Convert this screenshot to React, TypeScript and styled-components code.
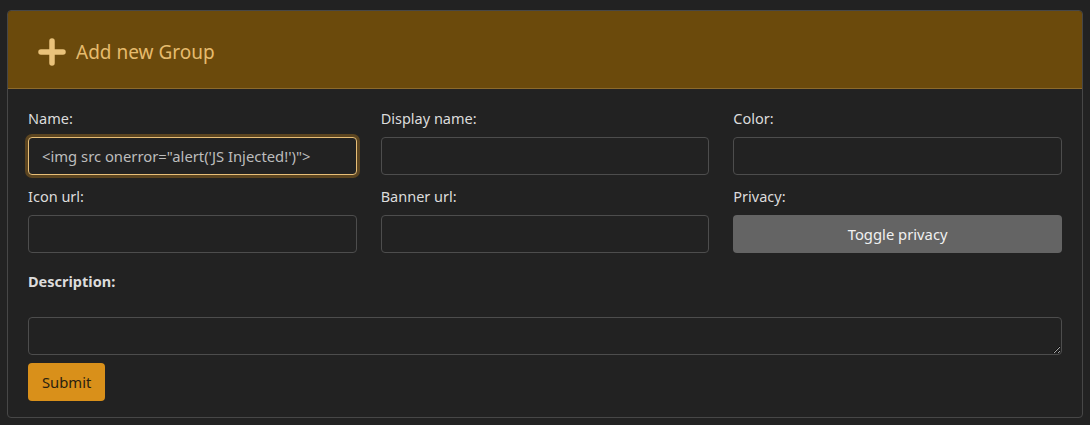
import React from "react";
import styled, { createGlobalStyle } from "styled-components";

const Global = createGlobalStyle`
  html, body { margin: 0; padding: 0; background: #222222; }
  body { font-family: "Noto Sans", "Open Sans", sans-serif; color: #dddddd; }
  * { box-sizing: border-box; }
`;

const Page = styled.div`
  padding: 10px 7px 7px 7px;
`;

const Card = styled.div`
  border: 1px solid #474747;
  border-radius: 4px;
  overflow: hidden;
  background: #222222;
`;

const Header = styled.div`
  display: flex;
  align-items: center;
  gap: 10px;
  height: 78px;
  padding: 4px 30px 0 30px;
  background: #6b4a0c;
  border-bottom: 1px solid #8c6a2c;
  color: #e6bb6d;
  font-size: 19px;
`;

const Body = styled.div`
  padding: 18px 20px 16px 20px;
`;

const Grid = styled.div`
  display: grid;
  grid-template-columns: repeat(3, 1fr);
  column-gap: 24px;
  row-gap: 10px;
`;

const Field = styled.div`
  display: flex;
  flex-direction: column;
  gap: 8px;
`;

const Label = styled.label<{ $bold?: boolean }>`
  font-size: 14.5px;
  line-height: 22px;
  color: #dcdcdc;
  font-weight: ${(p) => (p.$bold ? 700 : 400)};
`;

const Input = styled.input<{ $focus?: boolean }>`
  height: 38px;
  width: 100%;
  background: #222222;
  border: 1px solid ${(p) => (p.$focus ? "#e6be78" : "#4d4d4d")};
  border-radius: 4px;
  box-shadow: ${(p) => (p.$focus ? "0 0 0 3px #5c4520" : "none")};
  color: #bdbdbd;
  font-family: inherit;
  font-size: 14.8px;
  padding: 0 13px;
  outline: none;
`;

const ToggleButton = styled.button`
  height: 38px;
  width: 100%;
  background: #646464;
  border: none;
  border-radius: 4px;
  color: #f0f0f0;
  font-family: inherit;
  font-size: 14.8px;
`;

const DescSection = styled.div`
  display: flex;
  flex-direction: column;
  margin-top: 17px;
`;

const TextArea = styled.textarea`
  margin-top: 25px;
  height: 38px;
  width: 100%;
  background: #222222;
  border: 1px solid #4d4d4d;
  border-radius: 4px;
  color: #bdbdbd;
  font-family: inherit;
  font-size: 14.5px;
  padding: 6px 12px;
  outline: none;
  display: block;
  color-scheme: dark;
`;

const Submit = styled.button`
  margin-top: 8px;
  align-self: flex-start;
  height: 38px;
  padding: 0 14px;
  background: #d9901a;
  border: none;
  border-radius: 4px;
  color: #2a2210;
  font-family: inherit;
  font-size: 14.8px;
`;

const PlusIcon = () => (
  <svg width="28" height="28" viewBox="0 0 28 28">
    <path d="M14 3 V25 M3 14 H25" stroke="#e9c27b" strokeWidth="5.5" strokeLinecap="round" />
  </svg>
);

export default function App() {
  return (
    <>
      <Global />
      <Page>
        <Card>
          <Header>
            <PlusIcon />
            <span>Add new Group</span>
          </Header>
          <Body>
            <Grid>
              <Field>
                <Label>Name:</Label>
                <Input $focus defaultValue={`<img src onerror="alert('JS Injected!')">`} />
              </Field>
              <Field>
                <Label>Display name:</Label>
                <Input />
              </Field>
              <Field>
                <Label>Color:</Label>
                <Input />
              </Field>
              <Field>
                <Label>Icon url:</Label>
                <Input />
              </Field>
              <Field>
                <Label>Banner url:</Label>
                <Input />
              </Field>
              <Field>
                <Label>Privacy:</Label>
                <ToggleButton>Toggle privacy</ToggleButton>
              </Field>
            </Grid>
            <DescSection>
              <Label $bold>Description:</Label>
              <TextArea />
              <Submit>Submit</Submit>
            </DescSection>
          </Body>
        </Card>
      </Page>
    </>
  );
}
